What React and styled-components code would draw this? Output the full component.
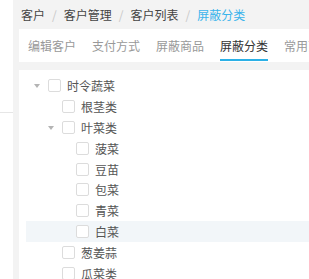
import React from "react";
import styled, { createGlobalStyle } from "styled-components";

const GlobalStyle = createGlobalStyle`
  html, body {
    margin: 0;
    padding: 0;
    background: #f3f3f3;
    overflow: hidden;
  }
  body {
    font-family: "Noto Sans CJK SC", "Noto Sans", sans-serif;
    font-size: 12px;
  }
`;

const crumbs = ["客户", "客户管理", "客户列表", "屏蔽分类"];
const tabs = ["编辑客户", "支付方式", "屏蔽商品", "屏蔽分类", "常用商品"];
const tree = [
  { label: "时令蔬菜", level: 0, open: true },
  { label: "根茎类", level: 1 },
  { label: "叶菜类", level: 1, open: true },
  { label: "菠菜", level: 2 },
  { label: "豆苗", level: 2 },
  { label: "包菜", level: 2 },
  { label: "青菜", level: 2 },
  { label: "白菜", level: 2, hover: true },
  { label: "葱姜蒜", level: 1 },
  { label: "瓜菜类", level: 1 },
];

function App() {
  return (
    <Page>
      <GlobalStyle />
      <Side>
        <SideItem />
      </Side>
      <Main>
        <Crumbs>
          {crumbs.map((c, i) => (
            <React.Fragment key={c}>
              {i > 0 && <Sep>/</Sep>}
              <Crumb last={i === crumbs.length - 1}>{c}</Crumb>
            </React.Fragment>
          ))}
        </Crumbs>
        <TabCard>
          {tabs.map((t) => (
            <Tab key={t} active={t === "屏蔽分类"}>
              {t}
            </Tab>
          ))}
        </TabCard>
        <TreeCard>
          {tree.map((n) => (
            <Row key={n.label} hover={n.hover}>
              <Indent level={n.level} />
              <Toggle>{n.open && <Arrow />}</Toggle>
              <Check />
              <Label>{n.label}</Label>
            </Row>
          ))}
        </TreeCard>
      </Main>
    </Page>
  );
}

export default App;

const Page = styled.div`
  display: grid;
  grid-template-columns: 13px 1fr;
  gap: 6px;
  height: 279px;
`;

const Side = styled.div`
  background: #fff;
`;

const SideItem = styled.div`
  height: 112px;
  border-bottom: 1px solid #e6e6e6;
`;

const Main = styled.div`
  display: flex;
  flex-direction: column;
  min-width: 0;
`;

const Crumbs = styled.div`
  height: 29px;
  line-height: 29px;
  padding-left: 2px;
  white-space: nowrap;
`;

const Crumb = styled.span`
  color: ${(p) => (p.last ? "#3ab4ec" : "#444")};
`;

const Sep = styled.span`
  color: #c8c8c8;
  margin: 0 7px;
`;

const TabCard = styled.div`
  background: #fff;
  height: 33px;
  padding: 0 9px;
  display: flex;
  gap: 16px;
  white-space: nowrap;
`;

const Tab = styled.div`
  padding-top: 4px;
  line-height: 26px;
  height: 26px;
  border-bottom: 2px solid ${(p) => (p.active ? "#2bb0e6" : "transparent")};
  color: ${(p) => (p.active ? "#333" : "#999")};
`;

const TreeCard = styled.div`
  background: #fff;
  margin-top: 8px;
  flex: 1;
  padding: 5.6px 0 0 7px;
`;

const Row = styled.div`
  display: flex;
  align-items: center;
  height: 20.8px;
  background: ${(p) => (p.hover ? "#f2f6f9" : "transparent")};
`;

const Indent = styled.div`
  width: ${(p) => p.level * 14}px;
  flex-shrink: 0;
`;

const Toggle = styled.div`
  width: 22px;
  height: 100%;
  display: flex;
  align-items: center;
  padding-left: 8px;
  box-sizing: border-box;
`;

const Arrow = styled.div`
  width: 0;
  height: 0;
  border-left: 3px solid transparent;
  border-right: 3px solid transparent;
  border-top: 4px solid #b4b4b4;
`;

const Check = styled.div`
  width: 11px;
  height: 11px;
  border: 1px solid #dcdcdc;
  border-radius: 2px;
  background: #fff;
  flex-shrink: 0;
`;

const Label = styled.span`
  margin-left: 6px;
  color: #555;
`;
